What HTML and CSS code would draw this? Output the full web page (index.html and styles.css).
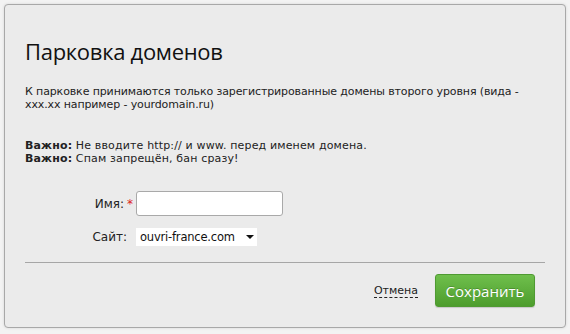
FILE: index.html
```html
<!DOCTYPE html>
<html lang="ru">
<head>
<meta charset="utf-8">
<title>Парковка доменов</title>
<link rel="stylesheet" href="styles.css">
</head>
<body>
<div class="dialog">
  <h1 class="title">Парковка доменов</h1>
  <p class="intro">К парковке принимаются только зарегистрированные домены второго уровня (вида - xxx.xx например - yourdomain.ru)</p>
  <p class="notes"><b>Важно:</b> Не вводите http:// и www. перед именем домена.<br><b>Важно:</b> Спам запрещён, бан сразу!</p>
  <div class="form">
    <label class="label" for="name">Имя:<span class="req">*</span></label>
    <input class="input" id="name" type="text">
    <label class="label label-site" for="site">Сайт:</label>
    <div class="select" id="site"><span>ouvri-france.com</span><span class="arrow"></span></div>
  </div>
  <div class="divider"></div>
  <div class="footer">
    <a class="cancel" href="#">Отмена</a>
    <button class="save" type="button">Сохранить</button>
  </div>
</div>
</body>
</html>
```
FILE: styles.css
```css
html, body {
  margin: 0;
  padding: 0;
  background: #f3f3f3;
}
body {
  padding: 4px;
  font-family: "DejaVu Sans", Verdana, sans-serif;
  font-size: 11px;
  color: #222;
}
.dialog {
  box-sizing: border-box;
  width: 562px;
  height: 324px;
  background: #ebebeb;
  border: 1px solid #a8a8a8;
  border-radius: 4px;
  box-shadow: 0 0 3px rgba(0,0,0,0.12);
  padding: 0 20px;
}
.title {
  margin: 31px 0 0;
  font-family: "Open Sans", sans-serif;
  font-weight: normal;
  font-size: 22px;
  letter-spacing: -0.3px;
  line-height: 30px;
  color: #111;
}
.intro {
  margin: 19px 0 0;
  line-height: 13px;
  letter-spacing: -0.12px;
}
.notes {
  margin: 28px 0 0;
  line-height: 13px;
  letter-spacing: 0.15px;
}
.notes b {
  font-weight: bold;
}
.form {
  display: grid;
  grid-template-columns: 108px auto;
  column-gap: 3px;
  row-gap: 12px;
  align-items: center;
  justify-items: start;
  margin-top: 26px;
}
.label {
  justify-self: end;
  font-size: 12px;
  color: #222;
}
.label-site {
  padding-right: 6px;
}
.req {
  color: #d22;
  margin-left: 3px;
}
.input {
  box-sizing: border-box;
  width: 147px;
  height: 25px;
  border: 1px solid #a9a9a9;
  border-radius: 3px;
  background: #fff;
  margin: 0;
}
.select {
  box-sizing: border-box;
  width: 121px;
  height: 18px;
  background: #fff;
  display: flex;
  align-items: center;
  justify-content: space-between;
  padding: 0 3px 0 4px;
  font-size: 11.5px;
  letter-spacing: -0.2px;
  color: #111;
}
.arrow {
  width: 0;
  height: 0;
  border-left: 4px solid transparent;
  border-right: 4px solid transparent;
  border-top: 4px solid #111;
}
.divider {
  height: 1px;
  background: #a6a6a6;
  margin-top: 16px;
}
.footer {
  display: flex;
  justify-content: flex-end;
  align-items: center;
  gap: 17px;
  padding-right: 10px;
  margin-top: 11px;
}
.cancel {
  color: #222;
  text-decoration: none;
  border-bottom: 1px dashed #222;
  line-height: 12px;
  margin-top: 2px;
}
.save {
  width: 100px;
  height: 33px;
  border: 1px solid #4f9a32;
  border-radius: 3px;
  background: linear-gradient(#6fbf4c, #4d9d2d);
  color: #fff;
  font-family: "Open Sans", sans-serif;
  font-size: 15px;
  padding: 0;
  text-shadow: 0 -1px 0 rgba(0,0,0,0.2);
  box-shadow: 0 1px 1px rgba(0,0,0,0.15);
}
```
